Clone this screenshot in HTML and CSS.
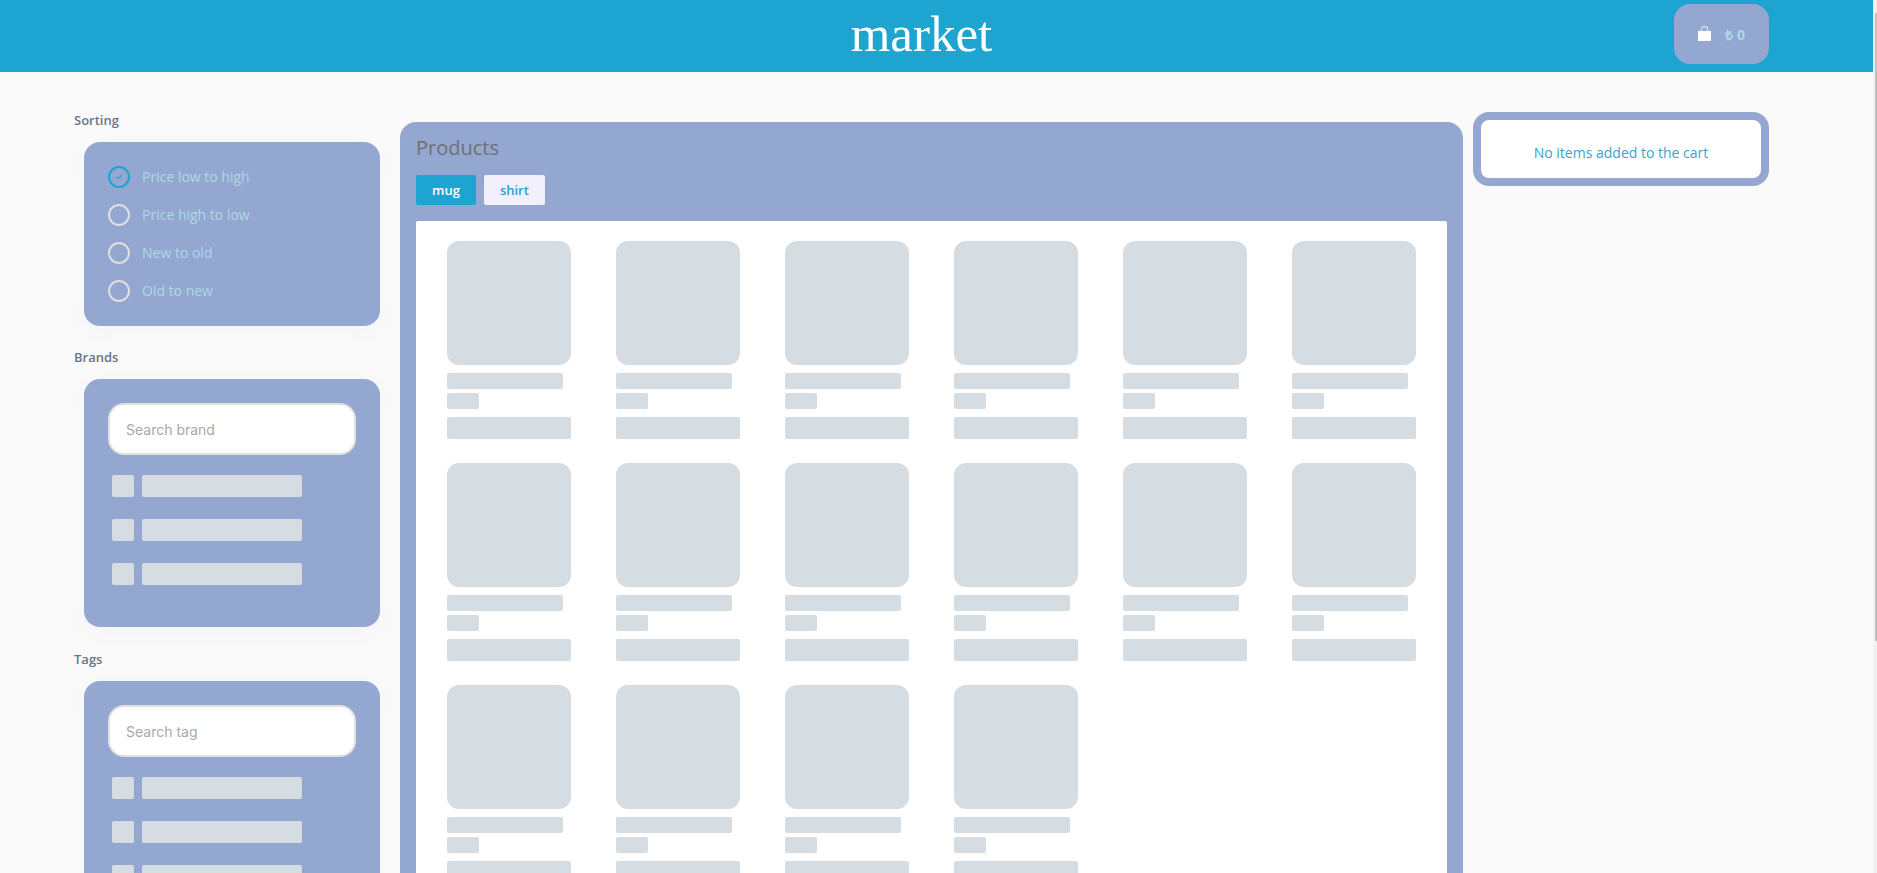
FILE: index.html
```html
<!DOCTYPE html>
<html lang="en">
<head>
<meta charset="utf-8">
<meta name="viewport" content="width=device-width, initial-scale=1">
<title>market</title>
<link rel="stylesheet" href="styles.css">
</head>
<body>
<div class="app">
  <header class="header">
    <a class="logo" href="#">market</a>
    <button class="basket" type="button" aria-label="Cart total">
      <svg class="basket-icon" viewBox="0 0 13 16" aria-hidden="true"><path d="M0 5h13v10H0z" fill="#fff"/><path d="M3.500 5V2.500a1.700 1.700 0 0 1 1.700-1.700h2.600a1.700 1.700 0 0 1 1.700 1.700V5" fill="none" stroke="#cdd9ee" stroke-width="1.500"/></svg>
      <span>₺ 0</span>
    </button>
  </header>
  <main class="layout">
    <aside class="filters">
      <h2 class="filter-title">Sorting</h2>
      <div class="card sorting">
        <label class="option"><span class="radio"><input type="radio" name="sort" checked><svg class="tick" viewBox="0 0 22 22" aria-hidden="true"><path d="M8 11l2 1.700 4.300-4" fill="none" stroke="#3aa2cf" stroke-width="1.300"/></svg></span>Price low to high</label>
        <label class="option"><span class="radio"><input type="radio" name="sort"></span>Price high to low</label>
        <label class="option"><span class="radio"><input type="radio" name="sort"></span>New to old</label>
        <label class="option"><span class="radio"><input type="radio" name="sort"></span>Old to new</label>
      </div>
      <h2 class="filter-title">Brands</h2>
      <div class="card">
        <input class="search" type="text" placeholder="Search brand" aria-label="Search brand">
        <div class="lines">
          <div class="line"><i class="bone box"></i><i class="bone bar"></i></div>
          <div class="line"><i class="bone box"></i><i class="bone bar"></i></div>
          <div class="line"><i class="bone box"></i><i class="bone bar"></i></div>
        </div>
      </div>
      <h2 class="filter-title">Tags</h2>
      <div class="card">
        <input class="search" type="text" placeholder="Search tag" aria-label="Search tag">
        <div class="lines">
          <div class="line"><i class="bone box"></i><i class="bone bar"></i></div>
          <div class="line"><i class="bone box"></i><i class="bone bar"></i></div>
          <div class="line"><i class="bone box"></i><i class="bone bar"></i></div>
        </div>
      </div>
    </aside>
    <section class="products">
      <h1 class="products-title">Products</h1>
      <div class="tabs">
        <button class="tab active" type="button">mug</button>
        <button class="tab" type="button">shirt</button>
      </div>
      <div class="grid">
        <div class="item"><i class="bone photo"></i><i class="bone price"></i><i class="bone name"></i><i class="bone add"></i></div>
        <div class="item"><i class="bone photo"></i><i class="bone price"></i><i class="bone name"></i><i class="bone add"></i></div>
        <div class="item"><i class="bone photo"></i><i class="bone price"></i><i class="bone name"></i><i class="bone add"></i></div>
        <div class="item"><i class="bone photo"></i><i class="bone price"></i><i class="bone name"></i><i class="bone add"></i></div>
        <div class="item"><i class="bone photo"></i><i class="bone price"></i><i class="bone name"></i><i class="bone add"></i></div>
        <div class="item"><i class="bone photo"></i><i class="bone price"></i><i class="bone name"></i><i class="bone add"></i></div>
        <div class="item"><i class="bone photo"></i><i class="bone price"></i><i class="bone name"></i><i class="bone add"></i></div>
        <div class="item"><i class="bone photo"></i><i class="bone price"></i><i class="bone name"></i><i class="bone add"></i></div>
        <div class="item"><i class="bone photo"></i><i class="bone price"></i><i class="bone name"></i><i class="bone add"></i></div>
        <div class="item"><i class="bone photo"></i><i class="bone price"></i><i class="bone name"></i><i class="bone add"></i></div>
        <div class="item"><i class="bone photo"></i><i class="bone price"></i><i class="bone name"></i><i class="bone add"></i></div>
        <div class="item"><i class="bone photo"></i><i class="bone price"></i><i class="bone name"></i><i class="bone add"></i></div>
        <div class="item"><i class="bone photo"></i><i class="bone price"></i><i class="bone name"></i><i class="bone add"></i></div>
        <div class="item"><i class="bone photo"></i><i class="bone price"></i><i class="bone name"></i><i class="bone add"></i></div>
        <div class="item"><i class="bone photo"></i><i class="bone price"></i><i class="bone name"></i><i class="bone add"></i></div>
        <div class="item"><i class="bone photo"></i><i class="bone price"></i><i class="bone name"></i><i class="bone add"></i></div>
      </div>
    </section>
    <aside class="cart">No items added to the cart</aside>
  </main>
</div>
<div class="scroll-track" aria-hidden="true"><div class="scroll-thumb"></div></div>
</body>
</html>
```
FILE: styles.css
```css
* {
  box-sizing: border-box;
}

body {
  margin: 0;
  background: #fafafa;
  font-family: "Open Sans", sans-serif;
  font-size: 14px;
}

button,
input {
  font: inherit;
  margin: 0;
}

.app {
  height: 100vh;
  overflow: hidden;
  margin-right: 4px;
}

.header {
  display: grid;
  grid-template-columns: 1fr auto 1fr;
  align-items: center;
  padding: 4px 104px 8px 74px;
  background: #1ea4d0;
}

.logo {
  grid-column: 2;
  color: #fff;
  font-family: "Liberation Serif", serif;
  font-size: 51px;
  line-height: 60px;
  text-decoration: none;
}

.basket {
  justify-self: end;
  display: flex;
  align-items: center;
  gap: 14px;
  height: 60px;
  padding: 0 24px;
  border: 0;
  border-radius: 16px;
  background: #93a7d1;
  color: #add8e6;
  font-weight: 700;
}

.basket-icon {
  width: 13px;
  height: 16px;
}

.layout {
  display: grid;
  grid-template-columns: 306px 1fr 296px;
  align-items: start;
  padding: 40px 104px 40px 74px;
}

.filter-title {
  margin: 24px 0 14px;
  color: #697488;
  font-size: 13px;
  font-weight: 600;
  line-height: 16px;
}

.filter-title:first-child {
  margin-top: 0;
}

.card {
  margin-left: 10px;
  padding: 24px 24px 42px;
  border-radius: 16px;
  background: #93a7d1;
  box-shadow: 0 6px 24px rgba(93, 62, 188, 0.04);
}

.sorting {
  display: grid;
  gap: 16px;
  padding-bottom: 24px;
}

.sorting + .filter-title {
  margin-top: 23px;
}

.option {
  display: flex;
  align-items: center;
  gap: 12px;
  color: #add8e6;
  line-height: 22px;
}

.radio {
  display: grid;
  width: 22px;
  height: 22px;
}

.radio > * {
  grid-area: 1 / 1;
  width: 22px;
  height: 22px;
}

.radio input {
  appearance: none;
  border: 2px solid #dfdee2;
  border-radius: 50%;
}

.radio input:checked {
  border-color: #1ea4ce;
}

.tick {
  pointer-events: none;
}

.search {
  display: block;
  width: 100%;
  height: 52px;
  padding: 0 16px;
  border: 2px solid #e0e0e0;
  border-radius: 16px;
  background: #fff;
  font-family: Inter, sans-serif;
}

.search::placeholder {
  color: #a8a8a8;
}

.lines {
  display: grid;
  gap: 22px;
  margin: 20px 4px 0;
}

.line {
  display: flex;
  gap: 8px;
}

.bone {
  display: block;
  border-radius: 2px;
  background: #d5dde2;
}

.box {
  width: 22px;
  height: 22px;
}

.bar {
  width: 160px;
  height: 22px;
}

.products {
  margin: 10px 10px 0 20px;
  padding: 12px 16px 16px;
  border-radius: 16px;
  background: #93a7d1;
}

.products-title {
  margin: 0 0 13px;
  color: #6f7074;
  font-size: 20px;
  font-weight: 400;
  line-height: 28px;
}

.tabs {
  display: flex;
  gap: 8px;
  margin-bottom: 16px;
}

.tab {
  height: 30px;
  padding: 0 16px;
  border: 0;
  border-radius: 2px;
  background: #f2f0fd;
  color: #1ea4ce;
  font-size: 13px;
  font-weight: 600;
}

.tab.active {
  background: #1ea4d0;
  color: #fff;
}

.grid {
  display: grid;
  grid-template-columns: repeat(6, 1fr);
  justify-items: center;
  row-gap: 24px;
  padding: 20px 8px;
  border-radius: 2px;
  background: #fff;
}

.item {
  width: 124px;
}

.photo {
  height: 124px;
  margin-bottom: 8px;
  border-radius: 12px;
}

.price {
  width: 116px;
  height: 16px;
  margin-bottom: 4px;
}

.name {
  width: 32px;
  height: 16px;
  margin-bottom: 8px;
}

.add {
  height: 22px;
}

.cart {
  padding: 24px 16px 16px;
  border: 8px solid #93a7d1;
  border-radius: 16px;
  background: #fff;
  color: #3aa2cf;
  line-height: 18px;
  text-align: center;
}

.scroll-track {
  position: fixed;
  top: 0;
  right: 0;
  bottom: 0;
  width: 4px;
  padding: 13px 0 0 2px;
  background: #f1f1f1;
}

.scroll-thumb {
  height: 73%;
  background: #c1c1c1;
}
```
